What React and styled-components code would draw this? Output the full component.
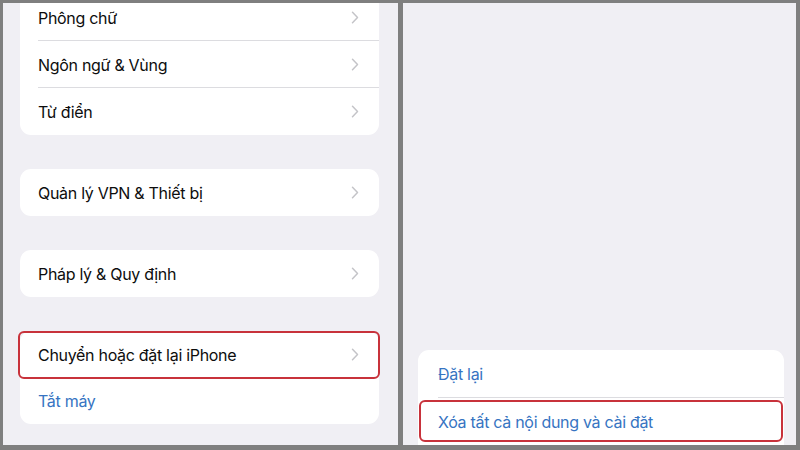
import React from 'react';
import styled, { createGlobalStyle, css } from 'styled-components';

const GlobalStyle = createGlobalStyle`
  html, body {
    margin: 0;
    padding: 0;
    background: #808080;
  }
  body {
    font-family: Inter, "Noto Sans", "Liberation Sans", sans-serif;
  }
`;

const Frame = styled.div`
  display: grid;
  grid-template-columns: 395px 1fr;
  gap: 5px;
  width: 800px;
  height: 450px;
  box-sizing: border-box;
  padding: 3px 4px 5px 3px;
  background: #7f7f7f;
`;

const Screen = styled.div`
  display: flex;
  flex-direction: column;
  justify-content: ${p => (p.bottom ? 'flex-end' : 'flex-start')};
  overflow: hidden;
  background: #f0eff4;
  padding: ${p => (p.bottom ? '0 12px 0 15px' : '0 19px 0 17px')};
`;

const Card = styled.div`
  flex: none;
  background: #ffffff;
  border-radius: 11px;
  margin-top: ${p => p.top}px;
  ${p => p.bottom && css`
    border-radius: 11px 11px 0 0;
  `}
`;

const Row = styled.div`
  position: relative;
  display: flex;
  align-items: center;
  height: ${p => p.h || 47}px;
  padding: 0 20px 0 ${p => p.pad || 18}px;
  font-size: 16px;
  letter-spacing: -0.3px;
  color: ${p => (p.link ? '#3674c2' : '#0d0d0d')};

  ${p => p.divider && css`
    &::before {
      content: '';
      position: absolute;
      left: ${p.pad || 18}px;
      right: 0;
      bottom: 0;
      height: 1px;
      background: #dcdce0;
    }
  `}

  ${p => p.mark && css`
    &::after {
      content: '';
      position: absolute;
      left: ${p.mark.l}px;
      right: ${p.mark.r}px;
      top: ${p.mark.t}px;
      bottom: ${p.mark.b}px;
      border: 2px solid #c8323b;
      border-radius: 6px;
      pointer-events: none;
    }
  `}
`;

const Label = styled.span`
  flex: 1;
  white-space: nowrap;
`;

const Chevron = () => (
  <svg width="8" height="13" viewBox="0 0 8 13" fill="none">
    <path d="M1.5 1.2 L6.5 6.5 L1.5 11.8" stroke="#c4c4c8" strokeWidth="1.5" strokeLinecap="round" strokeLinejoin="round" />
  </svg>
);

const leftMark = { l: -2, r: -1, t: 0, b: -1 };
const rightMark = { l: 1, r: 1, t: 2, b: 3 };

export default function App() {
  return (
    <>
      <GlobalStyle />
      <Frame>
        <Screen>
          <Card top={-9}>
            <Row divider><Label>Phông chữ</Label><Chevron /></Row>
            <Row divider><Label>Ngôn ngữ &amp; Vùng</Label><Chevron /></Row>
            <Row><Label>Từ điển</Label><Chevron /></Row>
          </Card>
          <Card top={34}>
            <Row><Label>Quản lý VPN &amp; Thiết bị</Label><Chevron /></Row>
          </Card>
          <Card top={34}>
            <Row><Label>Pháp lý &amp; Quy định</Label><Chevron /></Row>
          </Card>
          <Card top={34}>
            <Row mark={leftMark}><Label>Chuyển hoặc đặt lại iPhone</Label><Chevron /></Row>
            <Row h={46} link><Label>Tắt máy</Label></Row>
          </Card>
        </Screen>
        <Screen bottom>
          <Card bottom>
            <Row h={48} pad={20} link divider><Label>Đặt lại</Label></Row>
            <Row h={47} pad={20} link mark={rightMark}><Label>Xóa tất cả nội dung và cài đặt</Label></Row>
          </Card>
        </Screen>
      </Frame>
    </>
  );
}
